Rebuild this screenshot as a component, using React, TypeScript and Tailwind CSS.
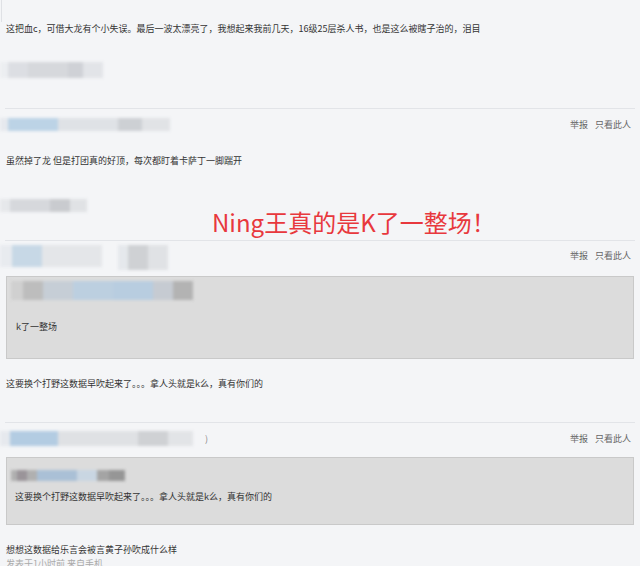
const FONT = { fontFamily: '"Microsoft YaHei", "Noto Sans CJK SC", "Noto Sans", sans-serif' };

/** A blurred username strip, built from soft coloured chunks. */
function Blur({ parts, h = "h-[12px]" }: { parts: [number, string][]; h?: string }) {
  return (
    <div className={`flex ${h} blur-[1.5px]`}>
      {parts.map(([w, c], i) => (
        <div key={i} style={{ width: w, backgroundColor: c }} />
      ))}
    </div>
  );
}

function Actions() {
  return (
    <div className="flex gap-[7px] text-[9px] leading-[14px] text-[#666]">
      <span>举报</span>
      <span>只看此人</span>
    </div>
  );
}

function Divider() {
  return <div className="mx-[5px] h-px bg-[#e2e4e8]" />;
}

export default function App() {
  return (
    <div className="h-[566px] w-[640px] overflow-hidden bg-[#f4f5f7] text-[9px] text-[#333]" style={FONT}>
      <div className="ml-px h-[22px] w-px bg-[#dfe1e5]" />
      <p className="px-[6px] leading-[14px]">
        这把血c，可借大龙有个小失误。最后一波太漂亮了，我想起来我前几天，16级25层杀人书，也是这么被瞎子治的，泪目
      </p>
      <div className="mt-[26px]">
        <Blur
          h="h-[16px]"
          parts={[
            [8, "#eceef1"],
            [20, "#dcdee3"],
            [40, "#d6d8dc"],
            [15, "#cfd1d6"],
            [20, "#e2e4e8"],
          ]}
        />
      </div>
      <div className="mt-[30px]">
        <Divider />
      </div>

      {/* second floor */}
      <div className="mt-[9px] flex h-[13px] items-center justify-between pr-[9px]">
        <Blur
          h="h-[13px]"
          parts={[
            [8, "#e6e9ee"],
            [50, "#bcd3e6"],
            [60, "#dfe2e6"],
            [24, "#cdd0d4"],
            [28, "#e1e3e6"],
          ]}
        />
        <Actions />
      </div>
      <p className="mt-[23px] px-[6px] leading-[14px]">虽然掉了龙 但是打团真的好顶，每次都盯着卡萨丁一脚踹开</p>
      <div className="mt-[31px]">
        <Blur
          h="h-[13px]"
          parts={[
            [10, "#e6e8eb"],
            [40, "#d6d8dc"],
            [20, "#c9cbcf"],
            [17, "#e0e2e5"],
          ]}
        />
      </div>
      <div className="-mt-[4px] h-[28px] pl-[212px] text-[24px] leading-[28px] text-[#e8383d]">Ning王真的是K了一整场！</div>
      <div className="mt-[4px]">
        <Divider />
      </div>

      {/* third floor */}
      <div className="mt-[4px] flex h-[25px] items-start justify-between pr-[9px]">
        <div className="flex items-start gap-[16px]">
          <Blur
            h="h-[22px]"
            parts={[
              [12, "#e8ebef"],
              [30, "#c7d8e6"],
              [60, "#e4e6e9"],
            ]}
          />
          <Blur h="h-[25px]" parts={[[10, "#e5e8ec"], [20, "#cfd1d4"], [20, "#e0e2e5"]]} />
        </div>
        <div className="mt-[4px]">
          <Actions />
        </div>
      </div>
      <div className="mx-[6px] mt-[6px] h-[83px] border border-[#c9c9c9] bg-[#dcdcdc] px-[4px] pt-[4px]">
        <Blur
          h="h-[19px]"
          parts={[
            [12, "#d0d0d0"],
            [20, "#bdbdbd"],
            [30, "#c6ced6"],
            [40, "#bccfe0"],
            [40, "#b8cde0"],
            [20, "#c6cbd2"],
            [20, "#b3b3b3"],
          ]}
        />
        <p className="mt-[20px] pl-[5px] leading-[14px]">k了一整场</p>
      </div>
      <p className="mt-[18px] px-[6px] leading-[14px]">这要换个打野这数据早吹起来了。。。拿人头就是k么，真有你们的</p>
      <div className="mt-[31px]">
        <Divider />
      </div>

      {/* fourth floor */}
      <div className="mt-[7px] flex h-[17px] items-center justify-between pr-[9px]">
        <div className="flex items-center">
          <Blur
            h="h-[15px]"
            parts={[
              [10, "#e6e9ee"],
              [48, "#b3cce2"],
              [80, "#dfe1e4"],
              [30, "#cfd1d4"],
              [25, "#e2e4e7"],
            ]}
          />
          <span className="ml-[12px] text-[#888]">)</span>
        </div>
        <Actions />
      </div>
      <div className="mx-[6px] mt-[10px] h-[68px] border border-[#c9c9c9] bg-[#dcdcdc] px-[4px] pt-[12px]">
        <Blur
          h="h-[11px]"
          parts={[
            [6, "#b0b0b0"],
            [10, "#9a9499"],
            [10, "#b0b0b0"],
            [40, "#aac0d6"],
            [20, "#c9d6e2"],
            [12, "#a4a4a4"],
            [16, "#969696"],
          ]}
        />
        <p className="mt-[9px] pl-[4px] leading-[14px]">这要换个打野这数据早吹起来了。。。拿人头就是k么，真有你们的</p>
      </div>
      <p className="mt-[18px] px-[6px] leading-[14px]">想想这数据给乐言会被言黄子孙吹成什么样</p>
      <p className="px-[6px] leading-[14px] text-[#aaa]">发表于1小时前 来自手机</p>
    </div>
  );
}
